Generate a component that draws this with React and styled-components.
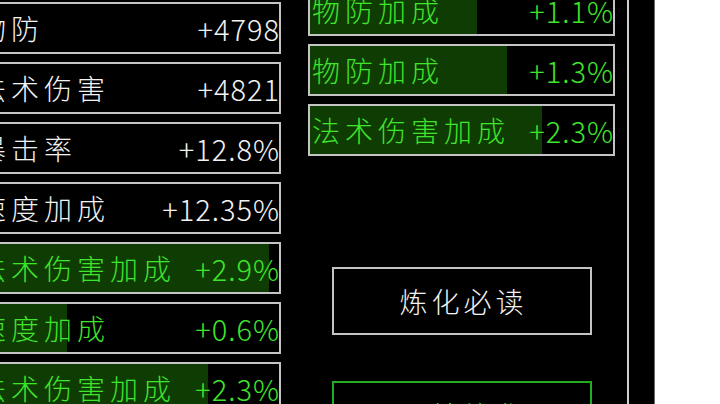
import React from "react";
import styled, { createGlobalStyle } from "styled-components";

const GlobalStyle = createGlobalStyle`
  html, body {
    margin: 0;
    padding: 0;
    background: #ffffff;
  }
  body {
    font-family: "Noto Sans CJK SC", "Noto Sans", sans-serif;
  }
`;

const leftStats = [
  { name: "物防", value: "+4798" },
  { name: "法术伤害", value: "+4821" },
  { name: "暴击率", value: "+12.8%" },
  { name: "速度加成", value: "+12.35%" },
  { name: "法术伤害加成", value: "+2.9%", amount: 2.9, max: 3 },
  { name: "速度加成", value: "+0.6%", amount: 0.6, max: 2 },
  { name: "法术伤害加成", value: "+2.3%", amount: 2.3, max: 3 },
];

const rightStats = [
  { name: "物防加成", value: "+1.1%", amount: 1.1, max: 2 },
  { name: "物防加成", value: "+1.3%", amount: 1.3, max: 2 },
  { name: "法术伤害加成", value: "+2.3%", amount: 2.3, max: 3 },
];

export default function App() {
  return (
    <>
      <GlobalStyle />
      <Screen>
        <Column $top={2}>
          {leftStats.map((s, i) => (
            <StatRow key={i} stat={s} />
          ))}
        </Column>
        <Column $top={-16}>
          {rightStats.map((s, i) => (
            <StatRow key={i} stat={s} />
          ))}
          <Actions>
            <ActionButton>炼化必读</ActionButton>
            <ActionButton $green>开始炼化</ActionButton>
          </Actions>
        </Column>
        <Divider />
      </Screen>
    </>
  );
}

function StatRow({ stat }) {
  const extra = stat.max != null;
  const pct = extra ? Math.min(100, (stat.amount / stat.max) * 100) : 0;
  return (
    <Row $extra={extra} style={extra ? { "--fill": `${pct}%` } : undefined}>
      <Name>{stat.name}</Name>
      <Value>{stat.value}</Value>
    </Row>
  );
}

const Screen = styled.div`
  display: flex;
  align-items: flex-start;
  width: 654px;
  height: 404px;
  background: #000;
  border-right: 1px solid #6a6a6a;
  overflow: hidden;
`;

const Column = styled.div`
  display: flex;
  flex-direction: column;
  gap: 8px;
  width: 307px;
  flex-shrink: 0;
  margin-top: ${(p) => p.$top}px;

  &:first-child {
    margin-left: -26px;
    margin-right: 27px;
  }
`;

const Row = styled.div`
  display: flex;
  align-items: center;
  justify-content: space-between;
  box-sizing: border-box;
  height: 52px;
  padding: 0 0 0 2px;
  border: 2px solid #c4c4c4;
  color: ${(p) => (p.$extra ? "#3fe42c" : "#f2f2f2")};
  background: ${(p) =>
    p.$extra
      ? "linear-gradient(to right, #0f3c03 var(--fill), #000 var(--fill))"
      : "#000"};
  font-size: 28px;
  line-height: 1;
  white-space: nowrap;
`;

const Name = styled.span`
  font-weight: 300;
  letter-spacing: 5px;
`;

const Value = styled.span`
  font-weight: 300;
  font-size: 29px;
  letter-spacing: 1px;
  margin-right: -1px;
`;

const Actions = styled.div`
  display: flex;
  flex-direction: column;
  align-items: center;
  gap: 46px;
  margin-top: 103px;
`;

const ActionButton = styled.div`
  display: flex;
  align-items: center;
  justify-content: center;
  box-sizing: border-box;
  width: 260px;
  height: 68px;
  border: 2px solid ${(p) => (p.$green ? "#1fae1f" : "#c4c4c4")};
  color: ${(p) => (p.$green ? "#3fe42c" : "#f2f2f2")};
  font-size: 28px;
  font-weight: 300;
  letter-spacing: 4px;
  padding-left: 4px;
`;

const Divider = styled.div`
  flex-shrink: 0;
  width: 2px;
  height: 100%;
  margin-left: 12px;
  background: #cfcfcf;
`;
